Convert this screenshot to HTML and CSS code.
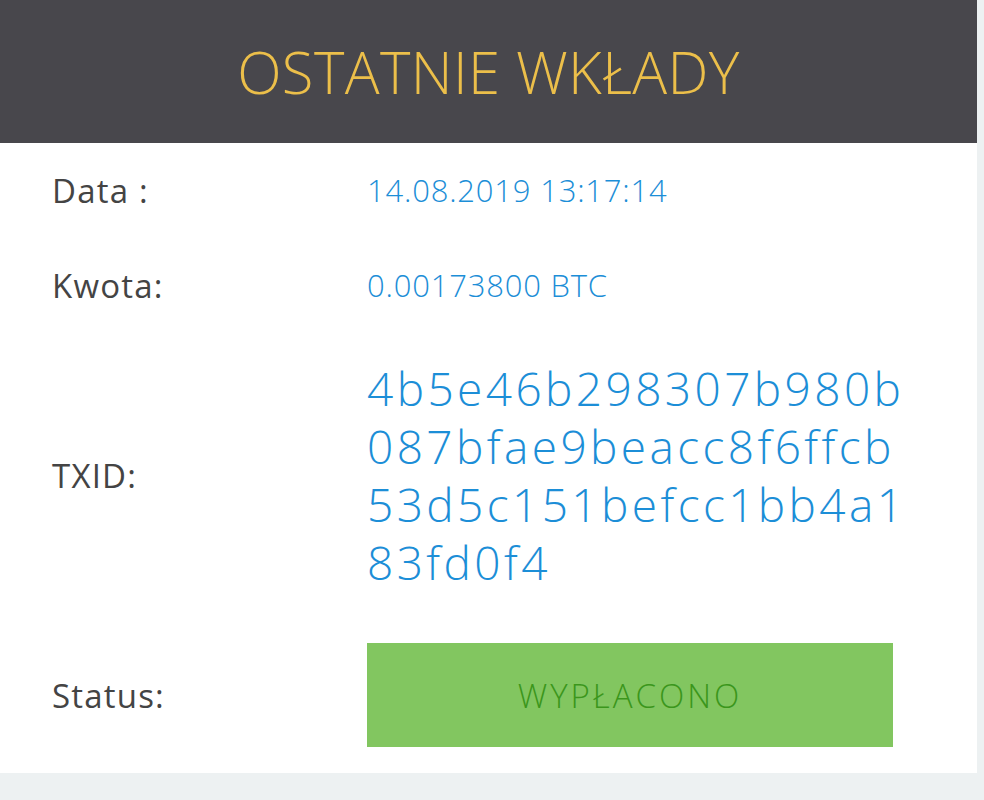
FILE: index.html
```html
<!DOCTYPE html>
<html lang="pl">
<head>
<meta charset="utf-8">
<title>Ostatnie wkłady</title>
<link rel="stylesheet" href="styles.css">
</head>
<body>
<div class="card">
  <div class="header"><h1 class="title">OSTATNIE WKŁADY</h1></div>
  <div class="rows">
    <div class="row">
      <div class="label">Data :</div>
      <div class="value">14.08.2019 13:17:14</div>
    </div>
    <div class="row">
      <div class="label">Kwota:</div>
      <div class="value">0.00173800 BTC</div>
    </div>
    <div class="row">
      <div class="label">TXID:</div>
      <div class="value txid">4b5e46b298307b980b087bfae9beacc8f6ffcb53d5c151befcc1bb4a183fd0f4</div>
    </div>
    <div class="row">
      <div class="label">Status:</div>
      <div class="value"><div class="status">WYPŁACONO</div></div>
    </div>
  </div>
</div>
</body>
</html>
```
FILE: styles.css
```css
html, body {
  margin: 0;
  padding: 0;
}
body {
  background: #edf1f2;
  font-family: "Open Sans", "Lato", sans-serif;
  width: 984px;
  height: 800px;
  overflow: hidden;
}
.card {
  width: 977px;
  background: #ffffff;
}
.header {
  height: 143px;
  background: #48474c;
  display: flex;
  align-items: center;
  justify-content: center;
}
.title {
  margin: 0;
  font-family: "Open Sans", sans-serif;
  font-weight: 300;
  font-size: 58px;
  color: #ecbf4a;
  letter-spacing: 0.4px;
  line-height: 1;
}
.rows {
  display: flex;
  flex-direction: column;
}
.row {
  display: grid;
  grid-template-columns: 367px 1fr;
  align-items: center;
  padding: 26px 0;
}
.label {
  padding-left: 52px;
  font-size: 33px;
  font-weight: 500;
  color: #444444;
  line-height: 43px;
  letter-spacing: 1.2px;
}
.value {
  font-size: 31px;
  font-weight: 300;
  color: #1c8ed7;
  line-height: 43px;
  letter-spacing: 0.8px;
}
.value.txid {
  font-size: 46px;
  line-height: 58px;
  word-break: break-all;
  letter-spacing: 3.4px;
  max-width: 545px;
}
.status {
  width: 526px;
  height: 104px;
  background: #82c660;
  color: #3b961c;
  display: flex;
  align-items: center;
  justify-content: center;
  font-size: 33px;
  font-weight: 300;
  letter-spacing: 3px;
}
```
